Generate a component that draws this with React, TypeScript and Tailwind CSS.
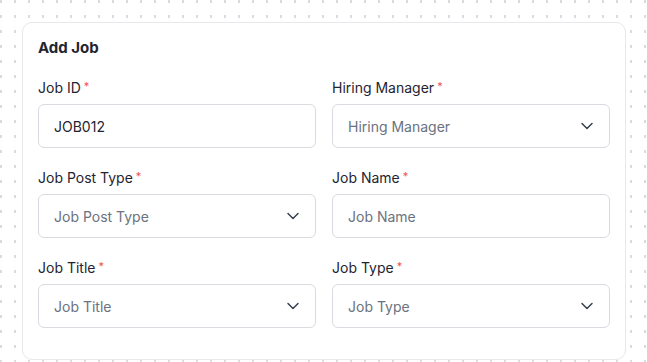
import { ChevronDown } from "lucide-react";

type Field = { label: string; value?: string; placeholder: string; select?: boolean };

const rows: Field[][] = [
  [
    { label: "Job ID", value: "JOB012", placeholder: "Job ID" },
    { label: "Hiring Manager", placeholder: "Hiring Manager", select: true },
  ],
  [
    { label: "Job Post Type", placeholder: "Job Post Type", select: true },
    { label: "Job Name", placeholder: "Job Name" },
  ],
  [
    { label: "Job Title", placeholder: "Job Title", select: true },
    { label: "Job Type", placeholder: "Job Type", select: true },
  ],
];

function FormField({ f }: { f: Field }) {
  return (
    <div className="flex flex-col">
      <label className="flex h-5 items-start text-[14px] leading-5 text-[#1f2430]">
        {f.label}
        <span className="ml-[3px] text-[11px] leading-4 text-[#f05252]">*</span>
      </label>
      <div className="mt-1.5 flex h-11 items-center justify-between rounded-md border border-[#d8dbe0] bg-white pl-[15px] pr-3">
        <span className={`text-[14px] ${f.value ? "text-[#1f2430]" : "text-[#6b7280]"}`}>
          {f.value ?? f.placeholder}
        </span>
        {f.select && <ChevronDown size={20} strokeWidth={1.8} className="text-[#374151]" />}
      </div>
    </div>
  );
}

export default function App() {
  return (
    <div
      className="h-[362px] w-[647px] overflow-hidden bg-white bg-[radial-gradient(circle,#d9dbe0_1.2px,transparent_1.5px)] bg-[size:14px_15px] bg-[position:-6px_-6px] pl-[22px] pr-[21px] pt-[22px]"
      style={{ fontFamily: "Inter, 'Liberation Sans', sans-serif" }}
    >
      <div className="rounded-[10px] border border-[#e6e8ec] bg-white px-[15px] pb-[31px] pt-[15px]">
        <h2 className="h-5 text-[15px] font-bold leading-5 text-[#1f2430]">Add Job</h2>
        <div className="mt-5 flex flex-col gap-5">
          {rows.map((r, i) => (
            <div key={i} className="grid grid-cols-2 gap-4">
              {r.map((f) => (
                <FormField key={f.label} f={f} />
              ))}
            </div>
          ))}
        </div>
      </div>
    </div>
  );
}
